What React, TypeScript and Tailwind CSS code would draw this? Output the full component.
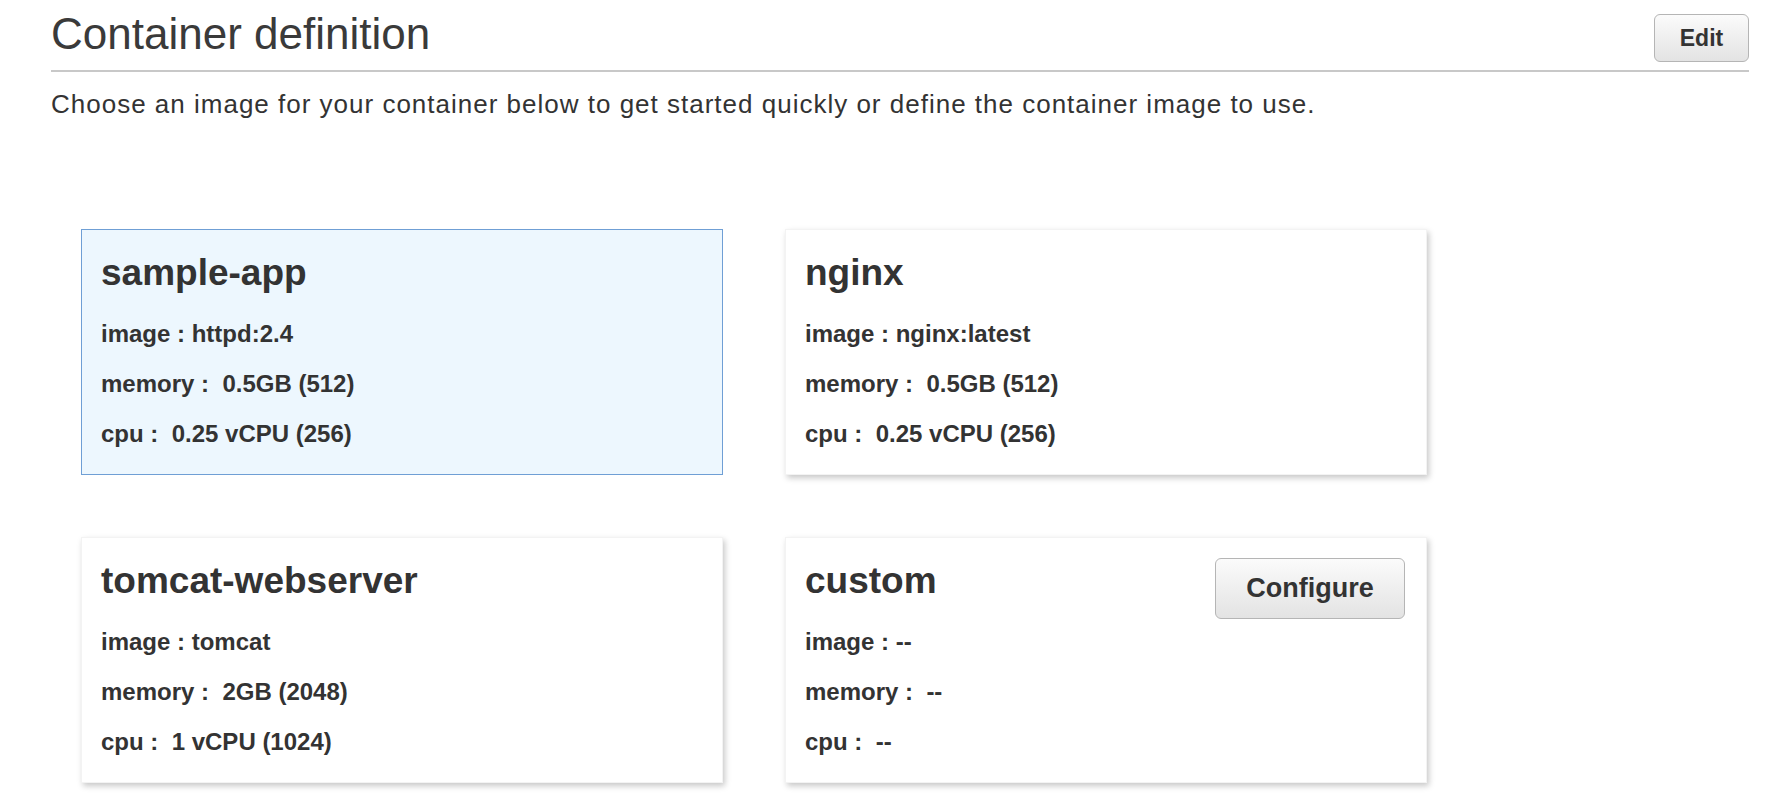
import { useState } from 'react';

type Container = {
  name: string;
  image: string;
  memory: string;
  cpu: string;
  custom?: boolean;
};

const containers: Container[] = [
  { name: 'sample-app', image: 'httpd:2.4', memory: '0.5GB (512)', cpu: '0.25 vCPU (256)' },
  { name: 'nginx', image: 'nginx:latest', memory: '0.5GB (512)', cpu: '0.25 vCPU (256)' },
  { name: 'tomcat-webserver', image: 'tomcat', memory: '2GB (2048)', cpu: '1 vCPU (1024)' },
  { name: 'custom', image: '--', memory: '--', cpu: '--', custom: true },
];

const App = () => {
  const [selected, setSelected] = useState('sample-app');

  return (
    <div className="min-h-screen bg-white text-[#333] font-['Liberation_Sans',Arial,sans-serif] pl-[51px] pr-[19px]">
      {/* Header */}
      <div className="flex justify-between items-start pt-[8px] pb-[8px] border-b-2 border-[#c8c8c8]">
        <h1 className="text-[44px] leading-[52px] font-normal text-[#3a3a3a]">Container definition</h1>
        <button className="mt-[6px] h-[48px] w-[95px] rounded-[6px] border border-[#b5b5b5] bg-gradient-to-b from-[#fbfbfb] to-[#e3e3e3] text-[23px] font-bold text-[#333]">
          Edit
        </button>
      </div>
      <p className="mt-[14px] text-[26px] leading-[36px] tracking-[1px] text-[#333]">
        Choose an image for your container below to get started quickly or define the container image to use.
      </p>

      {/* Cards */}
      <div className="mt-[107px] ml-[30px] grid grid-cols-[642px_642px] gap-x-[62px] gap-y-[62px]">
        {containers.map(c => {
          const active = selected === c.name;
          return (
            <div
              key={c.name}
              onClick={() => setSelected(c.name)}
              className={`h-[246px] border pl-[19px] pr-[21px] pt-[23px] cursor-pointer ${
                active
                  ? 'bg-[#edf7fe] border-[#6f9fd5]'
                  : 'bg-white border-[#f3f3f3] shadow-[2px_3px_6px_rgba(0,0,0,0.22)]'
              }`}
            >
              <div className="flex justify-between items-start h-[40px]">
                <h2 className="text-[37px] leading-[40px] font-bold text-[#333]">{c.name}</h2>
                {c.custom && (
                  <button className="-mt-[3px] h-[61px] w-[190px] rounded-[6px] border border-[#b5b5b5] bg-gradient-to-b from-[#fbfbfb] to-[#e3e3e3] text-[27px] font-bold text-[#333]">
                    Configure
                  </button>
                )}
              </div>
              <div className="mt-[16px] text-[24px] leading-[50px] font-bold text-[#333]">
                <div>image : {c.image}</div>
                <div>memory : &nbsp;{c.memory}</div>
                <div>cpu : &nbsp;{c.cpu}</div>
              </div>
            </div>
          );
        })}
      </div>
    </div>
  );
};

export default App;
